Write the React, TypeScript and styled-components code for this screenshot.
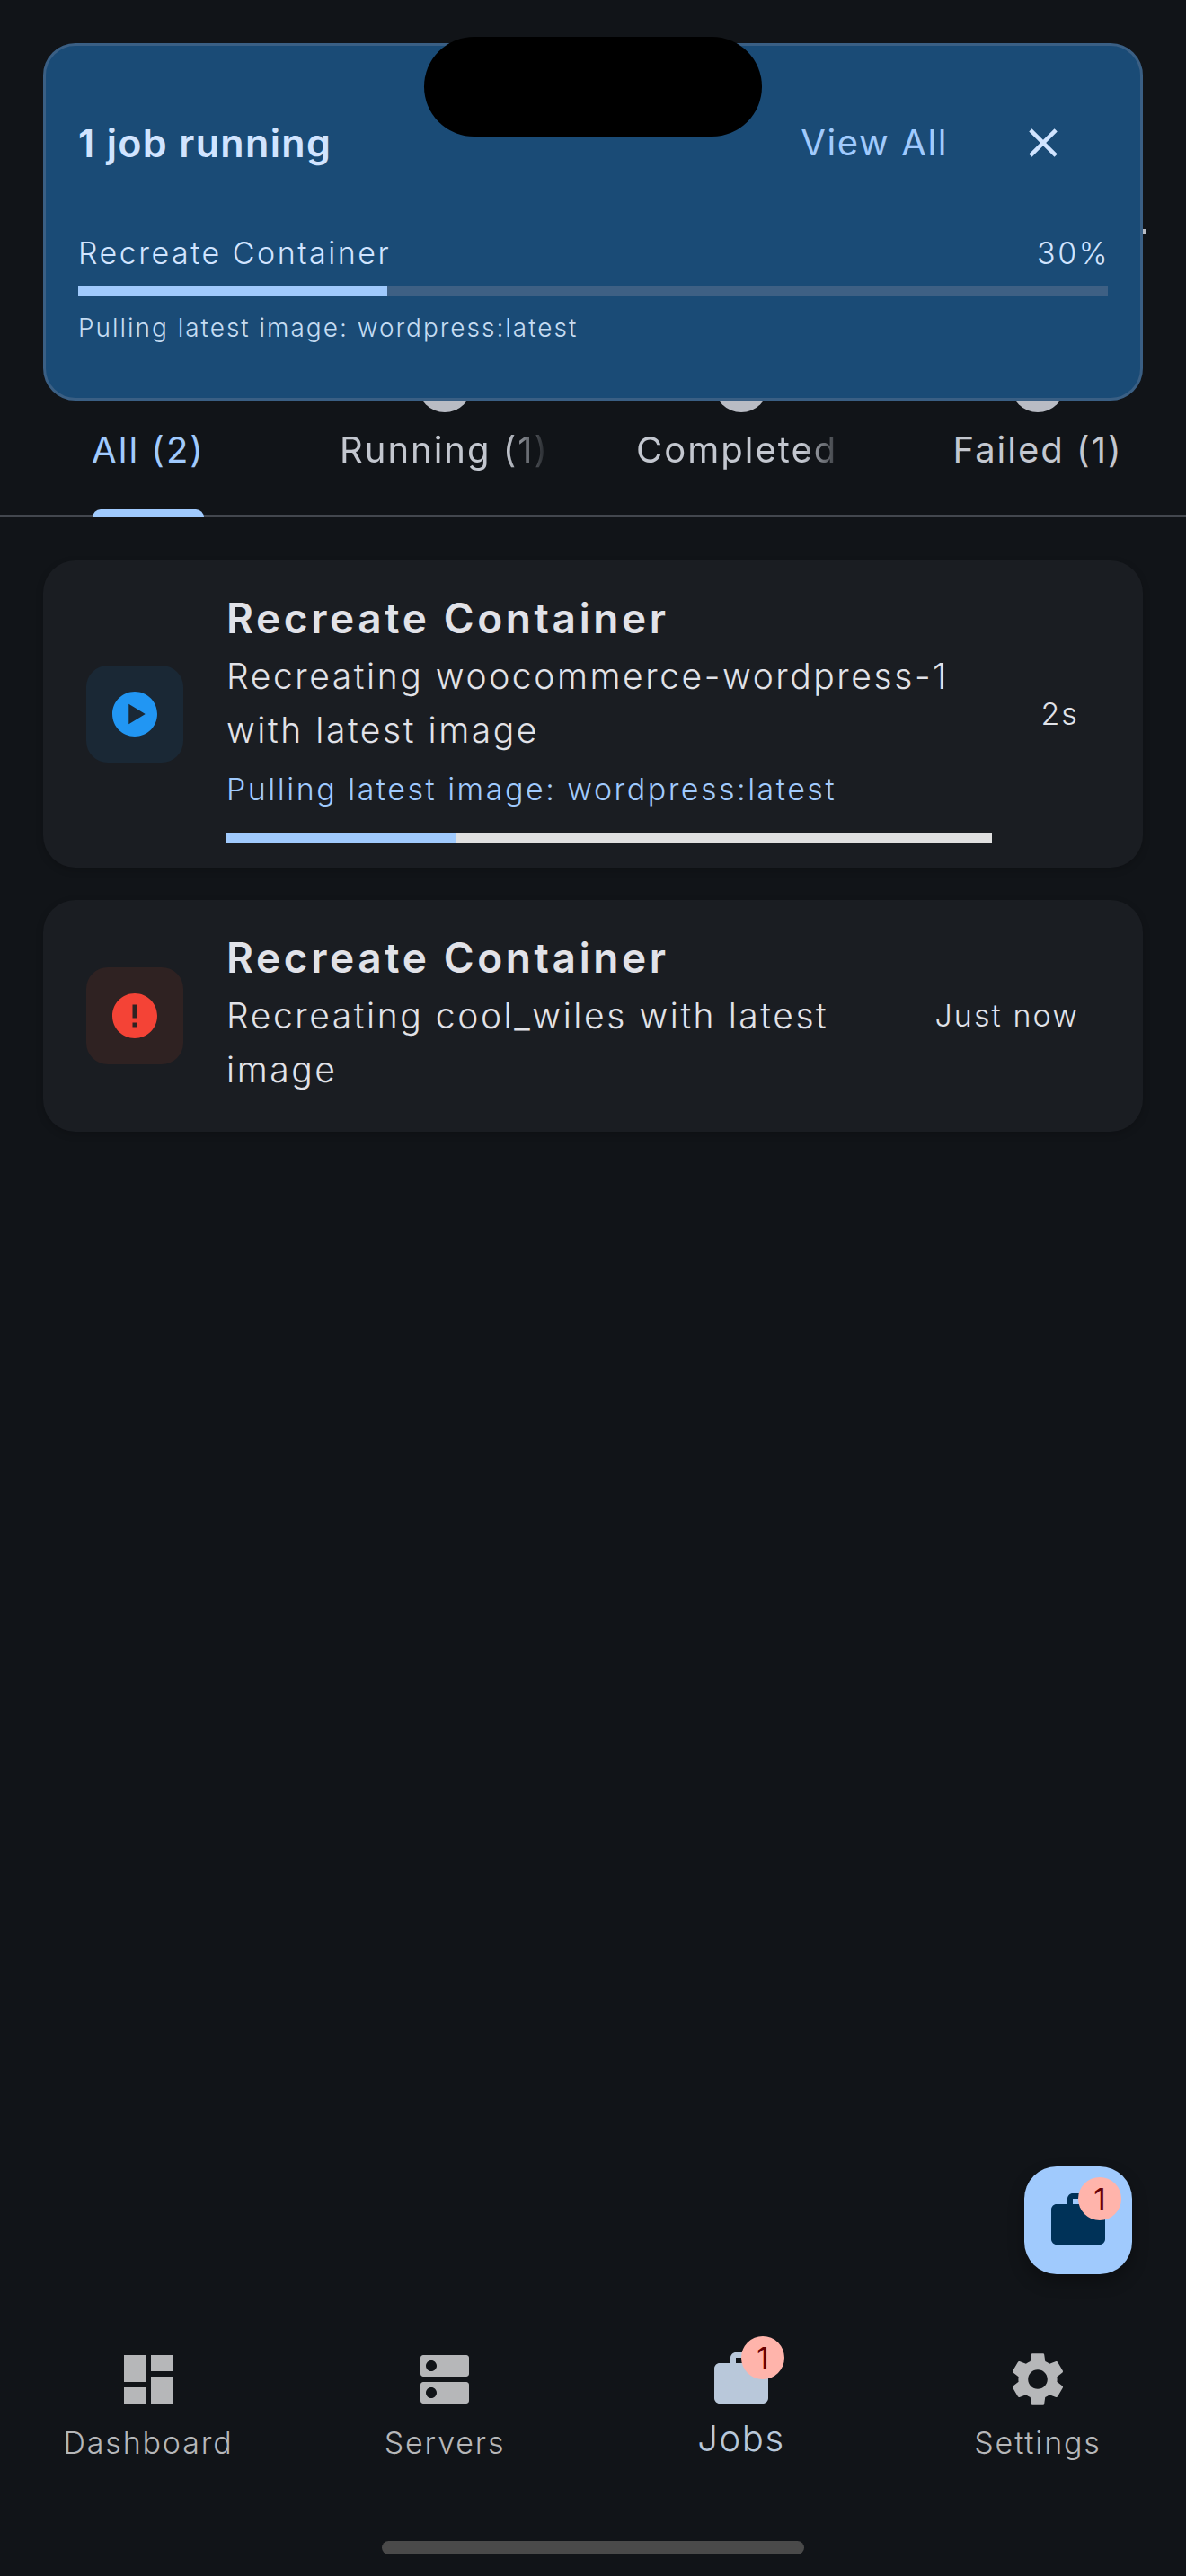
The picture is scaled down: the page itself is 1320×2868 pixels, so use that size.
import React from "react";
import styled, { createGlobalStyle } from "styled-components";

const Global = createGlobalStyle`
  html, body { margin: 0; padding: 0; background: #111418; }
  * { box-sizing: border-box; }
  body { font-family: Inter, "Noto Sans", sans-serif; }
`;

const Page = styled.div`
  position: relative;
  width: 1320px;
  height: 2868px;
  display: flex;
  flex-direction: column;
  overflow: hidden;
  background: #111418;
  color: #e1e2e8;
`;

const Notch = styled.div`
  position: absolute;
  left: 472px;
  top: 41px;
  width: 376px;
  height: 111px;
  border-radius: 56px;
  background: #000;
  z-index: 5;
`;

const EdgeTick = styled.div`
  position: absolute;
  left: 1272px;
  top: 255px;
  width: 3px;
  height: 6px;
  background: #b9bcc4;
`;

const Banner = styled.section`
  position: absolute;
  left: 48px;
  top: 48px;
  width: 1224px;
  height: 398px;
  padding: 72px 36px 0;
  border: 3px solid #3a5f84;
  border-radius: 36px;
  background: #1a4b76;
  z-index: 3;
`;

const BannerHead = styled.div`
  display: flex;
  align-items: center;
  height: 72px;
  padding-right: 36px;
`;

const BannerTitle = styled.div`
  flex: 1;
  font-size: 43px;
  font-weight: 600;
  line-height: 72px;
  letter-spacing: 1.35px;
  color: #d1e4ff;
`;

const ViewAll = styled.div`
  font-size: 40px;
  font-weight: 400;
  line-height: 72px;
  letter-spacing: 1.6px;
  color: #a0cafd;
  margin-right: 70px;
`;

const CloseBox = styled.div`
  width: 72px;
  height: 72px;
  display: flex;
  align-items: center;
  justify-content: center;
  color: #d1e4ff;
`;

const BannerRow = styled.div`
  display: flex;
  justify-content: space-between;
  margin: 63px -2px 0 0;
  font-size: 34px;
  font-weight: 350;
  line-height: 48px;
  letter-spacing: 2.5px;
  color: #d1e4ff;
`;

const Track = styled.div<{ $bg: string }>`
  height: 12px;
  background: ${(p) => p.$bg};
`;

const Fill = styled.div`
  height: 100%;
  background: #a0cafd;
`;

const BannerTrack = styled(Track)`
  margin-top: 12px;
`;

const BannerNote = styled.div`
  margin-top: 14px;
  font-size: 28px;
  font-weight: 350;
  line-height: 42px;
  letter-spacing: 1.98px;
  color: #c5dcf2;
`;

const TabBar = styled.nav`
  display: grid;
  grid-template-columns: repeat(4, 1fr);
  height: 576px;
  padding-top: 399px;
  border-bottom: 3px solid #43474e;
`;

const Tab = styled.div`
  position: relative;
  display: flex;
  flex-direction: column;
  align-items: center;
`;

const TabDot = styled.div<{ $hidden?: boolean }>`
  width: 60px;
  height: 60px;
  border-radius: 50%;
  background: ${(p) => (p.$hidden ? "transparent" : "#b9bcc4")};
`;

const TabLabel = styled.div<{ $active?: boolean; $fade?: boolean }>`
  margin-top: 12px;
  max-width: 234px;
  overflow: hidden;
  white-space: nowrap;
  font-size: 40px;
  font-weight: 400;
  line-height: 60px;
  letter-spacing: 2px;
  color: ${(p) => (p.$active ? "#a0cafd" : "#c3c7cf")};
  ${(p) =>
    p.$fade
      ? "width: 234px; -webkit-mask-image: linear-gradient(to right, #000 calc(100% - 48px), transparent 100%); mask-image: linear-gradient(to right, #000 calc(100% - 48px), transparent 100%);"
      : ""}
`;

const TabIndicator = styled.div`
  position: absolute;
  left: 103px;
  bottom: -3px;
  width: 124px;
  height: 9px;
  border-radius: 9px 9px 0 0;
  background: #a0cafd;
`;

const JobList = styled.main`
  display: flex;
  flex-direction: column;
  gap: 36px;
  padding: 48px 48px 0;
`;

const Card = styled.article`
  display: flex;
  align-items: center;
  padding: 0 71px 0 48px;
  border-radius: 36px;
  background: #1a1d22;
  box-shadow: 0 3px 9px rgba(0, 0, 0, 0.18);
`;

const StatusBox = styled.div<{ $bg: string; $fg: string }>`
  flex: none;
  width: 108px;
  height: 108px;
  margin-right: 48px;
  display: flex;
  align-items: center;
  justify-content: center;
  border-radius: 24px;
  background: ${(p) => p.$bg};
  color: ${(p) => p.$fg};
`;

const CardBody = styled.div<{ $progress?: boolean }>`
  flex: 1;
  min-width: 0;
  padding: 34px 0 ${(p) => (p.$progress ? "27px" : "39px")};
`;

const CardTitle = styled.div`
  font-size: 46px;
  font-weight: 600;
  line-height: 60px;
  letter-spacing: 3.6px;
  color: #e1e2e8;
`;

const CardText = styled.div`
  margin-top: 5px;
  font-size: 39px;
  font-weight: 350;
  line-height: 60px;
  letter-spacing: 2.57px;
  color: #e1e2e8;
`;

const CardNote = styled.div`
  margin-top: 12px;
  font-size: 34px;
  font-weight: 350;
  line-height: 48px;
  letter-spacing: 2.5px;
  color: #a0cafd;
`;

const CardTrack = styled(Track)`
  margin-top: 24px;
`;

const When = styled.div`
  flex: none;
  margin-left: 54px;
  font-size: 34px;
  font-weight: 350;
  line-height: 48px;
  letter-spacing: 2.1px;
  color: #e1e2e8;
`;

const Fab = styled.div`
  position: absolute;
  left: 1140px;
  top: 2412px;
  width: 120px;
  height: 120px;
  display: flex;
  align-items: center;
  justify-content: center;
  border-radius: 36px;
  background: #a0cafd;
  color: #003258;
  box-shadow: 0 9px 18px rgba(0, 0, 0, 0.3);
`;

const IconWrap = styled.div`
  position: relative;
  width: 72px;
  height: 72px;
`;

const Badge = styled.div`
  position: absolute;
  left: 36px;
  top: -12px;
  width: 48px;
  height: 48px;
  display: flex;
  align-items: center;
  justify-content: center;
  border-radius: 50%;
  background: #ffb4ab;
  color: #690005;
  font-size: 33px;
  line-height: 48px;
`;

const NavBar = styled.footer`
  margin-top: auto;
  display: grid;
  grid-template-columns: repeat(4, 1fr);
`;

const NavItem = styled.div<{ $active?: boolean }>`
  display: flex;
  flex-direction: column;
  align-items: center;
  color: ${(p) => (p.$active ? "#b9c8da" : "#b6b7b9")};
`;

const NavLabel = styled.div<{ $active?: boolean }>`
  margin-top: ${(p) => (p.$active ? "3px" : "8px")};
  height: ${(p) => (p.$active ? "59px" : "54px")};
  font-size: ${(p) => (p.$active ? "40px" : "34px")};
  font-weight: 350;
  line-height: 54px;
  letter-spacing: ${(p) => (p.$active ? "1.6px" : "1.85px")};
`;

const HomeBar = styled.div`
  align-self: center;
  flex: none;
  width: 470px;
  height: 15px;
  margin: 82px 0 24px;
  border-radius: 8px;
  background: #4a4a4a;
`;

const Icon = ({ d, size = 72 }: { d: string; size?: number }) => (
  <svg width={size} height={size} viewBox="0 0 24 24" fill="currentColor" style={{ display: "block" }}>
    <path d={d} fillRule="evenodd" />
  </svg>
);

const paths = {
  dashboard: "M3 13h8V3H3v10zm0 8h8v-6H3v6zm10 0h8V11h-8v10zm0-18v6h8V3h-8z",
  dns: "M20 13H4c-.55 0-1 .45-1 1v6c0 .55.45 1 1 1h16c.55 0 1-.45 1-1v-6c0-.55-.45-1-1-1zM7 19c-1.1 0-2-.9-2-2s.9-2 2-2 2 .9 2 2-.9 2-2 2zM20 3H4c-.55 0-1 .45-1 1v6c0 .55.45 1 1 1h16c.55 0 1-.45 1-1V4c0-.55-.45-1-1-1zM7 9c-1.1 0-2-.9-2-2s.9-2 2-2 2 .9 2 2-.9 2-2 2z",
  work: "M20 6h-4V4c0-1.11-.89-2-2-2h-4c-1.11 0-2 .89-2 2v2H4c-1.11 0-1.99.89-1.99 2L2 19c0 1.11.89 2 2 2h16c1.11 0 2-.89 2-2V8c0-1.11-.89-2-2-2zm-6 0h-4V4h4v2z",
  settings: "M19.14 12.94c.04-.3.06-.61.06-.94 0-.32-.02-.64-.07-.94l2.03-1.58c.18-.14.23-.41.12-.61l-1.92-3.32c-.12-.22-.37-.29-.59-.22l-2.39.96c-.5-.38-1.03-.7-1.62-.94l-.36-2.54c-.04-.24-.24-.41-.48-.41h-3.84c-.24 0-.43.17-.47.41l-.36 2.54c-.59.24-1.13.57-1.62.94l-2.39-.96c-.22-.08-.47 0-.59.22L2.74 8.87c-.12.21-.08.47.12.61l2.03 1.58c-.05.3-.09.63-.09.94s.02.64.07.94l-2.03 1.58c-.18.14-.23.41-.12.61l1.92 3.32c.12.22.37.29.59.22l2.39-.96c.5.38 1.03.7 1.62.94l.36 2.54c.05.24.24.41.48.41h3.84c.24 0 .44-.17.47-.41l.36-2.54c.59-.24 1.13-.56 1.62-.94l2.39.96c.22.08.47 0 .59-.22l1.92-3.32c.12-.22.07-.47-.12-.61l-2.01-1.58zM12 15.6c-1.98 0-3.6-1.62-3.6-3.6s1.62-3.6 3.6-3.6 3.6 1.62 3.6 3.6-1.62 3.6-3.6 3.6z",
  play: "M12 2C6.48 2 2 6.48 2 12s4.48 10 10 10 10-4.48 10-10S17.52 2 12 2zM9.3 16.5v-9l7.4 4.5-7.4 4.5z",
  error: "M12 2C6.48 2 2 6.48 2 12s4.48 10 10 10 10-4.48 10-10S17.52 2 12 2zm1 15h-2v-2h2v2zm0-4h-2V7h2v6z",
  close: "M19 6.41 17.59 5 12 10.59 6.41 5 5 6.41 10.59 12 5 17.59 6.41 19 12 13.41 17.59 19 19 17.59 13.41 12z",
};

const tabs = [
  { label: "All (2)", active: true },
  { label: "Running (1)", fade: true },
  { label: "Completed", fade: true },
  { label: "Failed (1)" },
];

const nav = [
  { label: "Dashboard", icon: paths.dashboard },
  { label: "Servers", icon: paths.dns },
  { label: "Jobs", icon: paths.work, active: true, badge: true },
  { label: "Settings", icon: paths.settings },
];

export default function App() {
  return (
    <Page>
      <Global />
      <Notch />
      <EdgeTick />
      <Banner>
        <BannerHead>
          <BannerTitle>1 job running</BannerTitle>
          <ViewAll>View All</ViewAll>
          <CloseBox>
            <Icon d={paths.close} size={54} />
          </CloseBox>
        </BannerHead>
        <BannerRow>
          <span>Recreate Container</span>
          <span>30%</span>
        </BannerRow>
        <BannerTrack $bg="#3e6084">
          <Fill style={{ width: "30%" }} />
        </BannerTrack>
        <BannerNote>Pulling latest image: wordpress:latest</BannerNote>
      </Banner>

      <TabBar>
        {tabs.map((t) => (
          <Tab key={t.label}>
            <TabDot $hidden={t.active} />
            <TabLabel $active={t.active} $fade={t.fade}>
              {t.label}
            </TabLabel>
            {t.active && <TabIndicator />}
          </Tab>
        ))}
      </TabBar>

      <JobList>
        <Card>
          <StatusBox $bg="#1a2835" $fg="#2196f3">
            <Icon d={paths.play} size={60} />
          </StatusBox>
          <CardBody $progress>
            <CardTitle>Recreate Container</CardTitle>
            <CardText>Recreating woocommerce-wordpress-1 with latest image</CardText>
            <CardNote>Pulling latest image: wordpress:latest</CardNote>
            <CardTrack $bg="#e0e0e0">
              <Fill style={{ width: "30%" }} />
            </CardTrack>
          </CardBody>
          <When>2s</When>
        </Card>
        <Card>
          <StatusBox $bg="#2f2222" $fg="#f44336">
            <Icon d={paths.error} size={60} />
          </StatusBox>
          <CardBody>
            <CardTitle>Recreate Container</CardTitle>
            <CardText>Recreating cool_wiles with latest image</CardText>
          </CardBody>
          <When>Just now</When>
        </Card>
      </JobList>

      <Fab>
        <IconWrap>
          <Icon d={paths.work} />
          <Badge>1</Badge>
        </IconWrap>
      </Fab>

      <NavBar>
        {nav.map((n) => (
          <NavItem key={n.label} $active={n.active}>
            <IconWrap>
              <Icon d={n.icon} />
              {n.badge && <Badge>1</Badge>}
            </IconWrap>
            <NavLabel $active={n.active}>{n.label}</NavLabel>
          </NavItem>
        ))}
      </NavBar>
      <HomeBar />
    </Page>
  );
}
